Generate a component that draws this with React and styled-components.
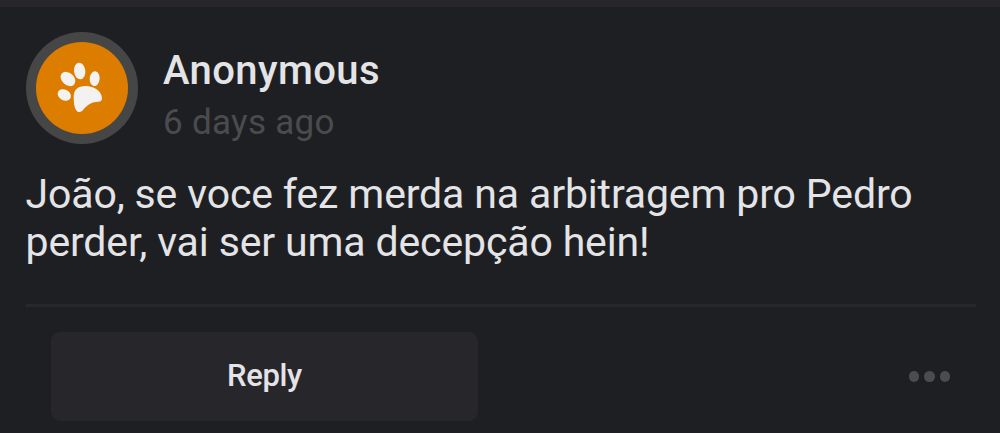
import React from 'react'
import styled, { createGlobalStyle } from 'styled-components'

const GlobalStyle = createGlobalStyle`
    body {
        margin: 0;
        background: #1e1f23;
        font-family: Roboto, sans-serif;
    }
`
const Page = styled.div`
    height: 433px;
    box-sizing: border-box;
    overflow: hidden;
    border-top: 7px solid #27262b;
    background: #1e1f23;
    padding: 25px 24px 0 26px;
`
const Header = styled.div`
    display: flex;
    gap: 25px;
    height: 112px;
`
const Avatar = styled.div`
    width: 112px;
    height: 112px;
    box-sizing: border-box;
    padding: 10px;
    border-radius: 50%;
    background: #464646;
`
const PawIcon = styled.svg`
    display: block;
    width: 92px;
    height: 92px;
    border-radius: 50%;
    background: #dc7d00;
    fill: #f3f2f0;
`
const Names = styled.div`
    padding-top: 15px;
`
const Name = styled.div`
    font-size: 40px;
    font-weight: 500;
    line-height: 48px;
    letter-spacing: 0.4px;
    color: #e4e4e6;
`
const Time = styled.div`
    font-size: 35px;
    line-height: 42px;
    margin-top: 7px;
    letter-spacing: 0.3px;
    color: #4b4b4e;
`
const Message = styled.p`
    margin: 26px 0 0 -0.5px;
    font-size: 41px;
    line-height: 48px;
    letter-spacing: -0.14px;
    white-space: nowrap;
    color: #e4e4e7;
`
const Divider = styled.div`
    height: 3px;
    margin-top: 38px;
    background: #27282c;
`
const Actions = styled.div`
    display: flex;
    justify-content: space-between;
    align-items: center;
    padding: 25px 26px 0 25px;
`
const Button = styled.button`
    width: 427px;
    height: 89px;
    padding: 0 0 2px;
    border: none;
    border-radius: 9px;
    background: #27262b;
    color: #e4e3e8;
    font-family: inherit;
    font-size: 31px;
    font-weight: 500;
    letter-spacing: -0.35px;
`
const More = styled.div`
    display: flex;
    gap: 5px;
`
const Dot = styled.span`
    width: 10.4px;
    height: 10.4px;
    border-radius: 50%;
    background: #4b4c50;
`

const Paw = () => (
    <PawIcon viewBox="108 126 276 276">
        <ellipse cx="239" cy="213" rx="17" ry="25" transform="rotate(-6 239 213)" />
        <ellipse cx="204" cy="237" rx="18" ry="25" transform="rotate(-48 204 237)" />
        <ellipse cx="193" cy="285" rx="16" ry="21" transform="rotate(-62 193 285)" />
        <ellipse cx="284" cy="236" rx="15" ry="22" transform="rotate(5 284 236)" />
        <path d="M221 290C221 269 234 258 256 258C283 258 305 273 306 295C306 302 303 305 295 305C276 305 261 315 251 328C246 335 242 337 236 336C225 334 221 314 221 290Z" />
    </PawIcon>
)

const CommentHeader = (props) => (
    <Header>
        <Avatar><Paw /></Avatar>
        <Names>
            <Name>{props.name}</Name>
            <Time>{props.time}</Time>
        </Names>
    </Header>
)

const CommentActions = () => (
    <Actions>
        <Button>Reply</Button>
        <More>
            <Dot />
            <Dot />
            <Dot />
        </More>
    </Actions>
)

const App = () => (
    <Page>
        <GlobalStyle />
        <CommentHeader name="Anonymous" time="6 days ago" />
        <Message>
            João, se voce fez merda na arbitragem pro Pedro<br />
            perder, vai ser uma decepção hein!
        </Message>
        <Divider />
        <CommentActions />
    </Page>
)

export default App
